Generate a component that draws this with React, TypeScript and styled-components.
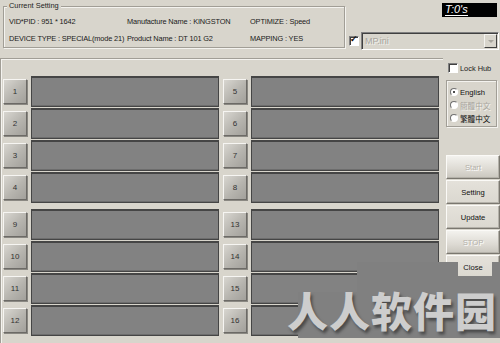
import React from "react";
import styled, { createGlobalStyle } from "styled-components";

const Global = createGlobalStyle`
  html, body { margin: 0; padding: 0; background: #d6d3ca; }
  * { box-sizing: border-box; }
`;

const FONT = `"Liberation Sans", Arial, sans-serif`;

const Window = styled.div`
  position: relative;
  width: 500px;
  height: 343px;
  overflow: hidden;
  background: #d8d5cc;
  font-family: ${FONT};
  font-size: 7.4px;
  color: #1a1a1a;
  display: flex;
  flex-direction: column;
`;

const TopRow = styled.div`
  display: flex;
  height: 58px;
`;

const GroupBox = styled.div`
  margin: 6px 0 0 3px;
  width: 342px;
  height: 42px;
  border: 1px solid #a19e96;
  box-shadow: inset 1px 1px 0 #f4f3ef, 1px 1px 0 #f4f3ef;
  padding: 0 5px;
`;

const Legend = styled.span`
  display: block;
  width: max-content;
  margin: -6px 0 0 -2px;
  padding: 0 2px;
  line-height: 10px;
  background: #d8d5cc;
  color: #222;
`;

const InfoGrid = styled.div`
  display: grid;
  grid-template-columns: 118px 123px 1fr;
  grid-auto-rows: 17px;
  align-items: center;
  margin-top: 2px;
  white-space: nowrap;
  letter-spacing: -0.15px;
`;

const TopRight = styled.div`
  display: flex;
  flex-direction: column;
  margin-left: 4px;
  width: 150px;
`;

const Timer = styled.div`
  align-self: flex-end;
  margin: 3px 2px 0 0;
  width: 55px;
  height: 14px;
  background: #000;
  color: #fff;
  font-style: italic;
  font-size: 11px;
  line-height: 13px;
  padding-left: 3px;
  span { border-bottom: 1px solid #fff; }
`;

const ComboRow = styled.div`
  display: flex;
  align-items: center;
  margin-top: 15px;
`;

const CheckBox = styled.div<{ $checked?: boolean }>`
  width: 10px;
  height: 10px;
  background: #fff;
  border: 1px solid;
  border-color: #808080 #fff #fff #808080;
  box-shadow: inset 1px 1px 0 #404040;
  position: relative;
  flex: none;
  &::after {
    content: ${(p) => (p.$checked ? '"✓"' : "none")};
    position: absolute;
    left: 0px;
    top: -3px;
    font-size: 9px;
    font-weight: bold;
    color: #111;
  }
`;

const Combo = styled.div`
  margin-left: 2px;
  width: 139px;
  height: 18px;
  border: 1px solid;
  border-color: #808080 #fff #fff #808080;
  box-shadow: inset 1px 1px 0 #404040;
  display: flex;
  align-items: center;
  background: #d8d5cc;
  color: #a8a59d;
  font-size: 9px;
  padding-left: 3px;
`;

const ComboText = styled.span`
  flex: 1;
  text-shadow: 1px 1px 0 #f2f1ec;
`;

const ComboArrow = styled.div`
  width: 13px;
  height: 14px;
  margin-right: 1px;
  border: 1px solid;
  border-color: #f4f3ef #404040 #404040 #f4f3ef;
  background: #d8d5cc;
  display: flex;
  align-items: center;
  justify-content: center;
  &::after {
    content: "";
    border-left: 3px solid transparent;
    border-right: 3px solid transparent;
    border-top: 3px solid #a8a59d;
  }
`;

const MainRow = styled.div`
  display: flex;
  flex: 1;
`;

const SlotsArea = styled.div`
  width: 443px;
  border-top: 1px solid #a19e96;
  border-left: 1px solid #a19e96;
  box-shadow: inset 1px 1px 0 #f4f3ef;
  padding: 17px 0 0 2px;
  display: flex;
  gap: 4px;
`;

const Column = styled.div`
  display: flex;
  flex-direction: column;
  gap: 6px;
`;

const Group = styled.div`
  display: flex;
  flex-direction: column;
  gap: 1px;
`;

const Slot = styled.div`
  display: flex;
  align-items: center;
  gap: 4px;
  height: 31px;
`;

const PortButton = styled.div`
  width: 24px;
  height: 25px;
  background: linear-gradient(135deg, #d8d6d0 0%, #b6b4ae 55%, #a2a09b 100%);
  border: 1px solid;
  border-color: #f6f5f2 #6c6a66 #6c6a66 #f6f5f2;
  box-shadow: 1px 1px 0 #8a8882;
  display: flex;
  align-items: center;
  justify-content: center;
  font-size: 8px;
  color: #333;
`;

const PortPanel = styled.div`
  width: 188px;
  height: 31px;
  background: #828282;
  border: 1px solid #454545;
  border-top-width: 2px;
  box-shadow: inset 0 -1px 0 #6d6d6d;
`;

const Side = styled.div`
  width: 54px;
  margin-left: 3px;
  display: flex;
  flex-direction: column;
`;

const LockRow = styled.label`
  display: flex;
  align-items: center;
  gap: 2px;
  margin: 5px 0 0 2px;
  height: 10px;
  white-space: nowrap;
`;

const RadioBox = styled.div`
  margin-top: 7px;
  width: 51px;
  height: 47px;
  border: 1px solid #a19e96;
  box-shadow: inset 1px 1px 0 #f4f3ef, 1px 1px 0 #f4f3ef;
  padding: 6px 0 0 3px;
  display: flex;
  flex-direction: column;
  gap: 3px;
`;

const RadioRow = styled.div<{ $disabled?: boolean }>`
  display: flex;
  align-items: center;
  gap: 2px;
  height: 10px;
  white-space: nowrap;
  font-family: ${FONT}, "Noto Sans CJK TC", sans-serif;
  font-size: 7.6px;
  color: ${(p) => (p.$disabled ? "#a8a59d" : "#111")};
  text-shadow: ${(p) => (p.$disabled ? "1px 1px 0 #f4f3ef" : "none")};
`;

const RadioDot = styled.div<{ $checked?: boolean }>`
  width: 8px;
  height: 8px;
  border-radius: 50%;
  background: #fff;
  border: 1px solid;
  border-color: #707070 #fff #fff #707070;
  flex: none;
  display: flex;
  align-items: center;
  justify-content: center;
  &::after {
    content: "";
    width: 2px;
    height: 2px;
    border-radius: 50%;
    background: ${(p) => (p.$checked ? "#111" : "transparent")};
  }
`;

const ActionList = styled.div`
  margin-top: 28px;
  display: flex;
  flex-direction: column;
  gap: 1px;
`;

const ActionButton = styled.div<{ $disabled?: boolean }>`
  height: 24px;
  width: 54px;
  display: flex;
  align-items: center;
  justify-content: center;
  font-size: 7.6px;
  border: 1px solid;
  border-color: #fbfaf7 #7a776f #7a776f #fbfaf7;
  box-shadow: inset -1px -1px 0 #b4b1a9;
  background: ${(p) =>
    p.$disabled
      ? "linear-gradient(180deg, #f3f2ee 0%, #dddad3 60%, #c9c6be 100%)"
      : "linear-gradient(180deg, #e4e1da 0%, #dbd8d0 100%)"};
  color: ${(p) => (p.$disabled ? "#b3b0a8" : "#111")};
  text-shadow: ${(p) => (p.$disabled ? "1px 1px 0 #fff" : "none")};
`;

const Watermark = styled.div`
  position: absolute;
  left: 285px;
  top: 262px;
  width: 215px;
  height: 76px;
  background: #808080;
  clip-path: polygon(72px 0, 173px 0, 173px 14px, 207px 14px, 207px 0, 215px 0, 215px 76px, 13px 76px, 13px 30px, 72px 30px);
`;

const WatermarkText = styled.div`
  position: absolute;
  left: 287px;
  top: 286px;
  font-family: "Noto Sans CJK SC", sans-serif;
  font-weight: 900;
  font-size: 41px;
  line-height: 46px;
  letter-spacing: 1px;
  color: #cdcdcd;
  text-shadow: 2px 3px 3px #4a4a4a;
  white-space: nowrap;
`;

const left = [
  [1, 2, 3, 4],
  [9, 10, 11, 12],
];
const right = [
  [5, 6, 7, 8],
  [13, 14, 15, 16],
];

function PortColumn({ groups }: { groups: number[][] }) {
  return (
    <Column>
      {groups.map((g, i) => (
        <Group key={i}>
          {g.map((n) => (
            <Slot key={n}>
              <PortButton>{n}</PortButton>
              <PortPanel />
            </Slot>
          ))}
        </Group>
      ))}
    </Column>
  );
}

export default function App() {
  return (
    <Window>
      <Global />
      <TopRow>
        <GroupBox>
          <Legend>Current Setting</Legend>
          <InfoGrid>
            <span>VID*PID : 951 * 1642</span>
            <span>Manufacture Name : KINGSTON</span>
            <span>OPTIMIZE : Speed</span>
            <span>DEVICE TYPE : SPECIAL(mode 21)</span>
            <span>Product Name : DT 101 G2</span>
            <span>MAPPING : YES</span>
          </InfoGrid>
        </GroupBox>
        <TopRight>
          <Timer>
            <span>T:0's</span>
          </Timer>
          <ComboRow>
            <CheckBox $checked />
            <Combo>
              <ComboText>MP.ini</ComboText>
              <ComboArrow />
            </Combo>
          </ComboRow>
        </TopRight>
      </TopRow>
      <MainRow>
        <SlotsArea>
          <PortColumn groups={left} />
          <PortColumn groups={right} />
        </SlotsArea>
        <Side>
          <LockRow>
            <CheckBox />
            <span>Lock Hub</span>
          </LockRow>
          <RadioBox>
            <RadioRow>
              <RadioDot $checked />
              <span>English</span>
            </RadioRow>
            <RadioRow $disabled>
              <RadioDot />
              <span>簡體中文</span>
            </RadioRow>
            <RadioRow>
              <RadioDot />
              <span>繁體中文</span>
            </RadioRow>
          </RadioBox>
          <ActionList>
            <ActionButton $disabled>Start</ActionButton>
            <ActionButton>Setting</ActionButton>
            <ActionButton>Update</ActionButton>
            <ActionButton $disabled>STOP</ActionButton>
            <ActionButton>Close</ActionButton>
          </ActionList>
        </Side>
      </MainRow>
      <Watermark />
      <WatermarkText>人人软件园</WatermarkText>
    </Window>
  );
}
